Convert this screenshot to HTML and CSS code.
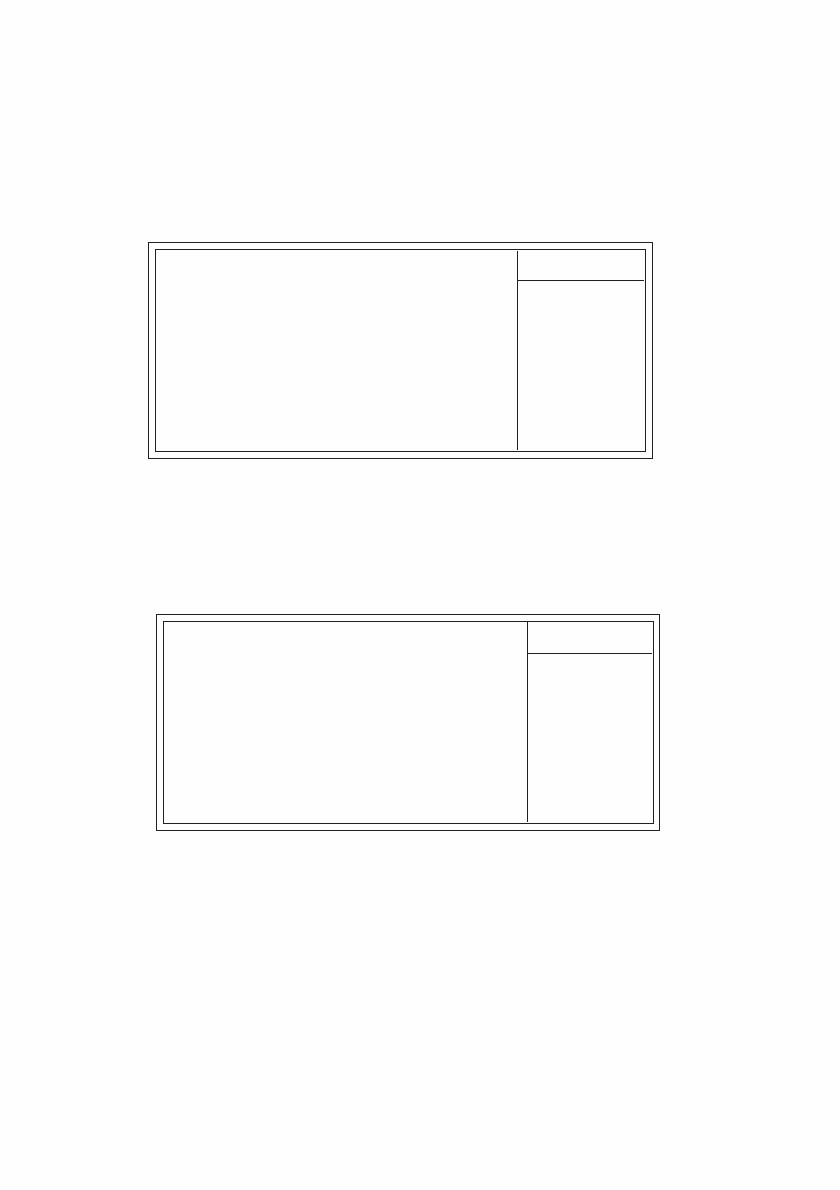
FILE: index.html
```html
<!DOCTYPE html>
<html lang="en">
<head>
    <meta charset="UTF-8">
    <meta name="viewport" content="width=device-width, initial-scale=1.0">
    <title>Screen Layouts</title>
    <link rel="stylesheet" href="styles.css">
</head>
<body>
    <main class="page">
        <section class="frame frame-first">
            <div class="screen">
                <div class="content"></div>
                <aside class="side">
                    <div class="side-head"></div>
                </aside>
            </div>
        </section>

        <section class="frame frame-second">
            <div class="screen">
                <div class="content"></div>
                <aside class="side">
                    <div class="side-head"></div>
                </aside>
            </div>
        </section>
    </main>
</body>
</html>
```

FILE: styles.css
```css
* { box-sizing: border-box; }
body { margin: 0; background-color: #fefefe; font-family: "Liberation Sans", Arial, sans-serif; color: #231f20; }
.page { display: flex; flex-direction: column; gap: 155px; padding: 242px 180px 120px 148px; }

/* double outline around each screen */
.frame { padding: 6px; border: 1px solid #231f20; }
.frame-first { margin-right: 7px; }
.frame-second { margin-left: 8px; padding-right: 5px; }
.screen { display: grid; grid-template-columns: 1fr 127px; min-height: 203px; padding: 1px; border: 1px solid #231f20; }
.frame-second .screen { grid-template-columns: 1fr 125px; padding-top: 0; }

/* right column with its header cell */
.side { border-left: 1px solid #231f20; }
.side-head { height: 30px; border-bottom: 1px solid #231f20; }
.frame-second .side-head { height: 32px; }
```
